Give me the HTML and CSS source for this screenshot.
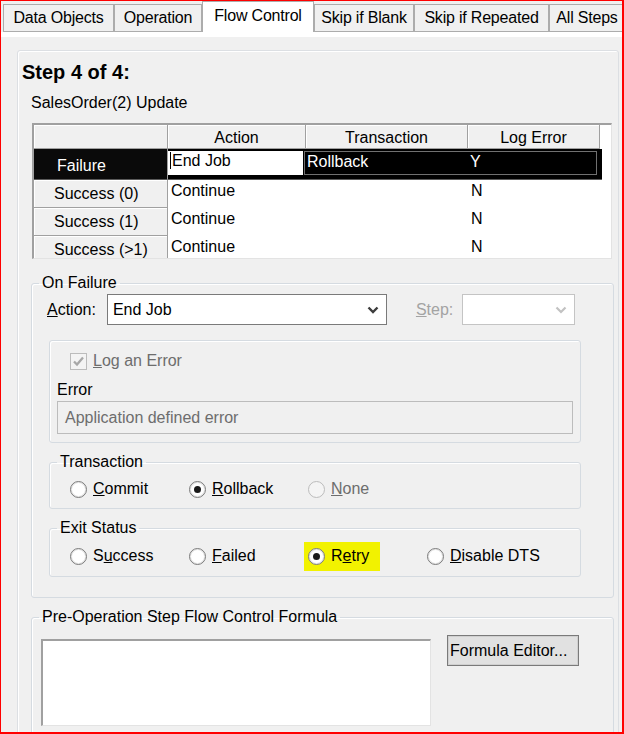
FILE: index.html
```html
<!DOCTYPE html>
<html>
<head>
  <title>Flow Control</title>
  <link rel="stylesheet" href="styles.css">
</head>
<body>

  <div class="window">
    <div class="tabs">
      <div class="tab">Data Objects</div>
      <div class="tab">Operation</div>
      <div class="tab active">Flow Control</div>
      <div class="tab">Skip if Blank</div>
      <div class="tab">Skip if Repeated</div>
      <div class="tab">All Steps</div>
    </div>
    <div class="tab-band"></div>

    <div class="page">
      <div class="panel">
        <div class="step-title">Step 4 of 4:</div>
        <div class="step-name">SalesOrder(2) Update</div>

        <!-- result grid -->
        <div class="grid">
          <div class="grid-row grid-head">
            <div class="corner"></div>
            <div class="col-head w-action">Action</div>
            <div class="col-head w-trans">Transaction</div>
            <div class="col-head w-log">Log Error</div>
          </div>
          <div class="grid-row row-current">
            <div class="row-head current">Failure</div>
            <div class="row-cells current">
              <div class="cell editing"><span class="caret">End Job</span></div>
              <div class="sel">
                <div class="sel-trans">Rollback</div>
                <div class="sel-log">Y</div>
              </div>
            </div>
          </div>
          <div class="grid-row">
            <div class="row-head">Success (0)</div>
            <div class="cell w-action">Continue</div>
            <div class="cell w-trans"></div>
            <div class="cell w-log">N</div>
          </div>
          <div class="grid-row">
            <div class="row-head">Success (1)</div>
            <div class="cell w-action">Continue</div>
            <div class="cell w-trans"></div>
            <div class="cell w-log">N</div>
          </div>
          <div class="grid-row">
            <div class="row-head">Success (&gt;1)</div>
            <div class="cell w-action">Continue</div>
            <div class="cell w-trans"></div>
            <div class="cell w-log">N</div>
          </div>
        </div>

        <fieldset class="group on-failure">
          <legend><span>On Failure</span></legend>
          <div class="action-row">
            <span class="action-label"><u>A</u>ction:</span>
            <div class="combo">
              <span>End Job</span>
              <svg width="12" height="8" viewBox="0 0 12 8"><path d="M1.5 1.5 L6 6 L10.5 1.5" fill="none" stroke="#3c3c3c" stroke-width="2.4"/></svg>
            </div>
            <span class="step-label"><u>S</u>tep:</span>
            <div class="combo disabled">
              <span></span>
              <svg width="12" height="8" viewBox="0 0 12 8"><path d="M1.5 1.5 L6 6 L10.5 1.5" fill="none" stroke="#c2c2c2" stroke-width="2.2"/></svg>
            </div>
          </div>

          <fieldset class="group inner log-group">
            <div class="check-row">
              <span class="checkbox">
                <svg width="15" height="15" viewBox="0 0 15 15"><path d="M3 7.5 L6 10.5 L12 3.5" fill="none" stroke="#a8a8a8" stroke-width="2.3"/></svg>
              </span>
              <span><u>L</u>og an Error</span>
            </div>
            <div class="error-label">Error</div>
            <div class="textbox">Application defined error</div>
          </fieldset>

          <fieldset class="group inner trans-group">
            <legend><span>Transaction</span></legend>
            <div class="radio-row">
              <div class="opt"><span class="radio"></span><span><u>C</u>ommit</span></div>
              <div class="opt"><span class="radio on"></span><span><u>R</u>ollback</span></div>
              <div class="opt disabled"><span class="radio"></span><span><u>N</u>one</span></div>
            </div>
          </fieldset>

          <fieldset class="group inner exit-group">
            <legend><span>Exit Status</span></legend>
            <div class="radio-row">
              <div class="opt"><span class="radio"></span><span>S<u>u</u>ccess</span></div>
              <div class="opt"><span class="radio"></span><span><u>F</u>ailed</span></div>
              <div class="opt"><span class="hl"><span class="radio on"></span><span>R<u>e</u>try</span></span></div>
              <div class="opt"><span class="radio"></span><span><u>D</u>isable DTS</span></div>
            </div>
          </fieldset>
        </fieldset>

        <fieldset class="group formula-group">
          <legend><span>Pre-Operation Step Flow Control Formula</span></legend>
          <div class="formula-row">
            <div class="formula"></div>
            <button class="btn">Formula Editor...</button>
          </div>
        </fieldset>
      </div>
    </div>
  </div>

</body>
</html>
```
FILE: styles.css
```css
* {
  box-sizing: border-box;
}

body {
  margin: 0;
  font-family: "Liberation Sans", Arial, sans-serif;
  font-size: 16px;
  color: #000;
  background: #fff;
}

.window {
  width: 624px;
  height: 734px;
  border-style: solid;
  border-color: #ff0000;
  border-width: 1px 2px 2px 1px;
  background: #f0f0f0;
  overflow: hidden;
}

/* Tabs */
.tabs {
  display: flex;
  align-items: flex-end;
  height: 31px;
  padding-left: 2px;
}

.tab {
  flex: none;
  height: 28px;
  line-height: 26px;
  border: 1px solid #acacac;
  background: #f0f0f0;
  text-align: center;
  white-space: nowrap;
  overflow: hidden;
  letter-spacing: -0.2px;
}

.tab:nth-child(1) { width: 111px; }
.tab:nth-child(2) { width: 88px; }
.tab:nth-child(3) { width: 112px; }
.tab:nth-child(4) { width: 100px; }
.tab:nth-child(5) { width: 135px; }
.tab:nth-child(6) { width: 76px; }

.tab.active {
  height: 31px;
  line-height: 27px;
  padding-bottom: 3px;
  border-bottom: none;
  background: #fff;
}

.tab-band {
  height: 5px;
  background: #fff;
}

/* Page */
.page {
  padding: 13px 3px 0 16px;
}

.panel {
  min-height: 720px;
  border: 1px solid #dcdfe3;
  border-radius: 3px;
  box-shadow: inset 1px 1px 0 #fff;
  padding: 10px 4px 0 13px;
}

.step-title {
  font-size: 20px;
  font-weight: bold;
  line-height: 23px;
  margin-left: -9px;
}

.step-name {
  line-height: 20px;
  margin-top: 9px;
}

/* Grid */
.grid {
  margin: 10px 2px 0 1px;
  height: 136px;
  overflow: hidden;
  background: #fff;
  border-top: 2px solid #a0a0a0;
  border-left: 2px solid #a0a0a0;
  border-right: 1px solid #e3e3e3;
  border-bottom: 1px solid #e3e3e3;
}

.grid-row {
  display: flex;
  height: 28px;
}

.grid-head {
  height: 24px;
}

.row-current {
  height: 31px;
}

.corner,
.col-head,
.row-head {
  flex: none;
  background: #f0f0f0;
  border-right: 1px solid #a0a0a0;
  border-bottom: 1px solid #a0a0a0;
  box-shadow: inset 1px 1px 0 #fff;
}

.corner {
  width: 134px;
}

.col-head {
  text-align: center;
  padding-top: 2px;
  line-height: 21px;
}

.w-action { width: 138px; }
.w-trans { width: 162px; }
.w-log { width: 132px; }

.row-head {
  width: 134px;
  display: flex;
  align-items: center;
  padding-left: 20px;
}

.row-head.current {
  background: #0a0a0a;
  color: #fff;
  padding-left: 23px;
  padding-top: 3px;
  border-bottom-color: #5a5a5a;
  box-shadow: none;
}

.cell {
  flex: none;
  padding: 2px 0 0 3px;
  line-height: 18px;
  white-space: nowrap;
}

.row-cells.current {
  display: flex;
  width: 434px;
  height: 31px;
  padding-top: 2px;
  background: #000;
  border-bottom: 1px solid #5a5a5a;
}

.cell.editing {
  width: 135px;
  height: 24px;
  margin-right: 1px;
  padding: 1px 0 0 2px;
  background: #fff;
}

.caret {
  border-left: 1px solid #000;
  padding-left: 1px;
}

.sel {
  display: flex;
  width: 293px;
  height: 24px;
  border: 1px solid #707070;
  color: #fff;
  line-height: 19px;
}

.sel-trans {
  width: 162px;
  padding-left: 2px;
}

.sel-log {
  padding-left: 3px;
}

/* Group boxes */
.group {
  margin: 0;
  padding: 0;
  min-width: 0;
  border: 1px solid #d5dbe1;
  border-radius: 3px;
  box-shadow: inset 1px 1px 0 #fff;
}

.group legend {
  margin-left: 7px;
  padding: 0 3px;
  line-height: 18px;
}

.on-failure {
  margin-top: 15px;
  padding-bottom: 20px;
}

.action-row {
  display: flex;
  align-items: center;
  height: 31px;
  margin-top: 2px;
  padding-left: 15px;
}

.action-label {
  margin-right: 11px;
}

.step-label {
  margin-left: 29px;
  margin-right: 9px;
  color: #a3a3a3;
}

.combo {
  flex: none;
  width: 280px;
  height: 31px;
  display: flex;
  align-items: center;
  justify-content: space-between;
  padding: 0 7px 0 5px;
  background: #fff;
  border: 1px solid #7a7a7a;
}

.combo.disabled {
  width: 113px;
  border-color: #c4c4c4;
}

.inner {
  margin-left: 17px;
  margin-right: 32px;
}

.log-group {
  margin-top: 15px;
  padding: 10px 7px 8px 7px;
}

.check-row {
  display: flex;
  align-items: center;
  gap: 6px;
  height: 20px;
  margin-left: 13px;
  color: #6d6d6d;
}

.checkbox {
  width: 17px;
  height: 17px;
  display: flex;
  align-items: center;
  justify-content: center;
  border: 1px solid #bcbcbc;
  background: #f4f4f4;
}

.error-label {
  margin-top: 10px;
  line-height: 18px;
}

.textbox {
  margin-top: 2px;
  height: 33px;
  display: flex;
  align-items: center;
  padding-left: 7px;
  border: 1px solid #bcbcbc;
  background: #f0f0f0;
  color: #6d6d6d;
}

.trans-group {
  margin-top: 10px;
  padding-bottom: 9px;
}

.exit-group {
  margin-top: 10px;
  padding-bottom: 10px;
}

.radio-row {
  display: flex;
  align-items: center;
  height: 20px;
  margin-top: 8px;
  padding-left: 20px;
}

.exit-group .radio-row {
  margin-top: 9px;
}

.opt {
  flex: none;
  width: 119px;
  display: flex;
  align-items: center;
  gap: 6px;
  white-space: nowrap;
}

.radio {
  flex: none;
  width: 17px;
  height: 17px;
  border-radius: 50%;
  border: 1px solid #7a7a7a;
  background: #fff;
  box-shadow: inset 0 0 0 1px #e4e4e4;
  display: flex;
  align-items: center;
  justify-content: center;
}

.radio.on::after {
  content: "";
  width: 7px;
  height: 7px;
  border-radius: 50%;
  background: #1a1a1a;
}

.opt.disabled {
  color: #6d6d6d;
}

.opt.disabled .radio {
  border-color: #bcbcbc;
  background: #f4f4f4;
  box-shadow: none;
}

.hl {
  display: flex;
  align-items: center;
  gap: 6px;
  height: 29px;
  padding: 0 11px 0 4px;
  margin: 0 -11px 0 -4px;
  background: #f2f200;
}

/* Formula */
.formula-group {
  margin-top: 10px;
  padding-bottom: 20px;
}

.formula-row {
  display: flex;
  align-items: flex-start;
  padding-left: 9px;
}

.formula {
  width: 390px;
  height: 87px;
  margin-top: 13px;
  background: #fff;
  border-top: 2px solid #a0a0a0;
  border-left: 2px solid #a0a0a0;
  border-right: 1px solid #e3e3e3;
  border-bottom: 1px solid #e3e3e3;
}

.btn {
  width: 132px;
  height: 31px;
  margin-top: 9px;
  margin-left: 16px;
  padding: 0 0 0 2px;
  text-align: left;
  font-family: "Liberation Sans", Arial, sans-serif;
  font-size: 16px;
  color: #000;
  background: #e1e1e1;
  border: 1px solid #7a7a7a;
  box-shadow: inset 0 0 0 1px #d0d0d0;
}
```
